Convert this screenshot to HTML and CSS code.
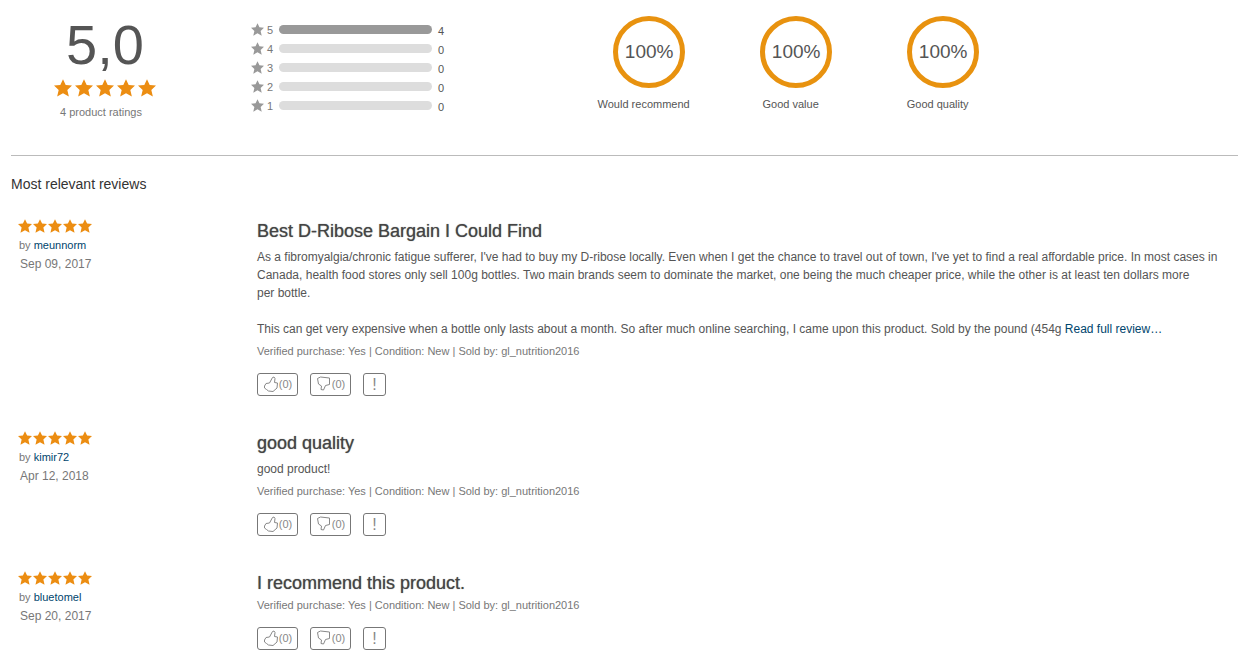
FILE: index.html
```html
<!DOCTYPE html>
<html lang="en">
<head>
  <meta charset="UTF-8">
  <meta name="viewport" content="width=device-width, initial-scale=1.0">
  <title>Ratings and Reviews</title>
  <link rel="stylesheet" href="styles.css">
</head>
<body>
  <!-- shared icons -->
  <svg class="sprite" aria-hidden="true">
    <symbol id="star" viewBox="0 0 20 20">
      <path d="M10 .3l3 6.300 7 .7-5.200 4.900 1.700 7.300L10 15.900l-6.500 3.600 1.700-7.300L0 7.300l7-.7z"/>
    </symbol>
    <symbol id="up" viewBox="0 0 16 18">
      <path d="M1.500 11L3 8.500l3.500-.5L9.500 2.500l1.500-.5 1 1.500-.5 4 3 .5-.5 5-4 3.500-4.500-.5-2-1.500-2-1.500z"/>
    </symbol>
    <symbol id="down" viewBox="0 0 16 18">
      <path d="M1.500 3.500L4.500 2l4.500.5 4.500.5v6.500L9.500 10.500 7.500 15l-2.500-.5.5-3.500-3-2z"/>
    </symbol>
  </svg>

  <!-- rating summary -->
  <section class="summary">
    <div class="score">
      <span class="score-num">5,0</span>
      <div class="stars stars-big" role="img" aria-label="5 out of 5 stars">
        <svg><use href="#star"/></svg><svg><use href="#star"/></svg><svg><use href="#star"/></svg><svg><use href="#star"/></svg><svg><use href="#star"/></svg>
      </div>
      <span class="score-count">4 product ratings</span>
    </div>
    <ul class="histogram">
      <li><svg><use href="#star"/></svg><span class="level">5</span><span class="bar full"></span><span class="count">4</span></li>
      <li><svg><use href="#star"/></svg><span class="level">4</span><span class="bar"></span><span class="count">0</span></li>
      <li><svg><use href="#star"/></svg><span class="level">3</span><span class="bar"></span><span class="count">0</span></li>
      <li><svg><use href="#star"/></svg><span class="level">2</span><span class="bar"></span><span class="count">0</span></li>
      <li><svg><use href="#star"/></svg><span class="level">1</span><span class="bar"></span><span class="count">0</span></li>
    </ul>
    <div class="aspects">
      <div class="aspect"><span class="ring">100%</span><span>Would recommend</span></div>
      <div class="aspect"><span class="ring">100%</span><span>Good value</span></div>
      <div class="aspect"><span class="ring">100%</span><span>Good quality</span></div>
    </div>
  </section>

  <!-- reviews -->
  <section class="reviews">
    <h2>Most relevant reviews</h2>

    <article class="review">
      <div class="author">
        <div class="stars" role="img" aria-label="5 out of 5 stars">
          <svg><use href="#star"/></svg><svg><use href="#star"/></svg><svg><use href="#star"/></svg><svg><use href="#star"/></svg><svg><use href="#star"/></svg>
        </div>
        <p class="by">by <a href="#">meunnorm</a></p>
        <p class="date">Sep 09, 2017</p>
      </div>
      <div class="content">
        <h3>Best D-Ribose Bargain I Could Find</h3>
        <p class="text">As a fibromyalgia/chronic fatigue sufferer, I've had to buy my D-ribose locally. Even when I get the chance to travel out of town, I've yet to find a real affordable price. In most cases in<br>Canada, health food stores only sell 100g bottles. Two main brands seem to dominate the market, one being the much cheaper price, while the other is at least ten dollars more<br>per bottle.<br><br>This can get very expensive when a bottle only lasts about a month. So after much online searching, I came upon this product. Sold by the pound (454g <a href="#">Read full review…</a></p>
        <p class="meta">Verified purchase: Yes | Condition: New | Sold by: gl_nutrition2016</p>
        <div class="votes">
          <button type="button" aria-label="Helpful (0)"><svg><use href="#up"/></svg>(0)</button>
          <button type="button" aria-label="Not helpful (0)"><svg><use href="#down"/></svg>(0)</button>
          <button type="button" class="report" aria-label="Report">!</button>
        </div>
      </div>
    </article>

    <article class="review">
      <div class="author">
        <div class="stars" role="img" aria-label="5 out of 5 stars">
          <svg><use href="#star"/></svg><svg><use href="#star"/></svg><svg><use href="#star"/></svg><svg><use href="#star"/></svg><svg><use href="#star"/></svg>
        </div>
        <p class="by">by <a href="#">kimir72</a></p>
        <p class="date">Apr 12, 2018</p>
      </div>
      <div class="content">
        <h3>good quality</h3>
        <p class="text">good product!</p>
        <p class="meta">Verified purchase: Yes | Condition: New | Sold by: gl_nutrition2016</p>
        <div class="votes">
          <button type="button" aria-label="Helpful (0)"><svg><use href="#up"/></svg>(0)</button>
          <button type="button" aria-label="Not helpful (0)"><svg><use href="#down"/></svg>(0)</button>
          <button type="button" class="report" aria-label="Report">!</button>
        </div>
      </div>
    </article>

    <article class="review">
      <div class="author">
        <div class="stars" role="img" aria-label="5 out of 5 stars">
          <svg><use href="#star"/></svg><svg><use href="#star"/></svg><svg><use href="#star"/></svg><svg><use href="#star"/></svg><svg><use href="#star"/></svg>
        </div>
        <p class="by">by <a href="#">bluetomel</a></p>
        <p class="date">Sep 20, 2017</p>
      </div>
      <div class="content">
        <h3>I recommend this product.</h3>
        <p class="meta">Verified purchase: Yes | Condition: New | Sold by: gl_nutrition2016</p>
        <div class="votes">
          <button type="button" aria-label="Helpful (0)"><svg><use href="#up"/></svg>(0)</button>
          <button type="button" aria-label="Not helpful (0)"><svg><use href="#down"/></svg>(0)</button>
          <button type="button" class="report" aria-label="Report">!</button>
        </div>
      </div>
    </article>
  </section>
</body>
</html>
```
FILE: styles.css
```css
* {
  margin: 0;
  padding: 0;
  box-sizing: border-box;
}
body {
  padding-left: 11px;
  font-family: "Liberation Sans", Arial, sans-serif;
  font-size: 12px;
  line-height: 18px;
  color: #555;
  background: #fff;
}
a {
  color: #00456d;
  text-decoration: none;
}
a:hover {
  text-decoration: underline;
}
.sprite {
  display: none;
}

/* summary */
.summary {
  display: flex;
  align-items: flex-start;
  padding: 15px 0 36px;
  border-bottom: 1px solid #bbb;
}
.score {
  display: flex;
  flex-direction: column;
  align-items: center;
  width: 188px;
  margin-right: 52px;
}
.score-num {
  font-size: 56px;
  line-height: 60px;
}
.score-count {
  margin: 8px 8px 0 0;
  font-size: 11px;
  line-height: 14px;
  color: #777;
}
.stars {
  display: flex;
  gap: 1px;
}
.stars svg {
  width: 14px;
  height: 14px;
  fill: #ec8d12;
}
.stars-big {
  gap: 3px;
  margin-top: 4px;
}
.stars-big svg {
  width: 18px;
  height: 18px;
}
.histogram {
  margin-top: 5px;
  list-style: none;
  font-size: 11px;
}
.histogram li {
  display: flex;
  align-items: center;
  height: 19px;
}
.histogram svg {
  width: 13px;
  height: 13px;
  fill: #999;
}
.level {
  width: 15px;
  padding-left: 3px;
  color: #777;
}
.bar {
  width: 153px;
  height: 9px;
  border-radius: 5px;
  background: #ddd;
}
.bar.full {
  background: #999;
}
.count {
  margin: 2px 0 0 6px;
}
.aspects {
  display: flex;
  margin-left: 126px;
}
.aspect {
  display: flex;
  flex-direction: column;
  align-items: center;
  width: 147px;
  font-size: 11px;
}
.ring {
  width: 72px;
  height: 72px;
  margin: 1px 0 7px 11px;
  border: 5px solid #e8920f;
  border-radius: 50%;
  font-size: 19px;
  line-height: 62px;
  text-align: center;
}

/* reviews */
.reviews h2 {
  margin: 19px 0 26px;
  font-size: 14px;
  font-weight: normal;
  color: #333;
}
.review {
  display: flex;
  margin-bottom: 35px;
}
.author {
  flex: none;
  width: 246px;
  padding-left: 7px;
}
.by {
  margin: 3px 0 1px 1px;
  font-size: 11px;
  color: #777;
}
.date {
  margin-left: 2px;
  color: #777;
}
.content {
  flex: 1;
  padding-top: 1px;
}
.content h3 {
  font-size: 18px;
  font-weight: normal;
  line-height: 22px;
  color: #444;
  text-shadow: 0 0 1px #777;
}
.text {
  margin: 6px 0 4px;
}
.meta {
  margin-top: 2px;
  font-size: 11px;
  color: #777;
}
.votes {
  display: flex;
  gap: 12px;
  margin-top: 13px;
}
.votes button {
  display: flex;
  align-items: center;
  justify-content: center;
  width: 41px;
  height: 23px;
  padding-bottom: 2px;
  border: 1px solid #777;
  border-radius: 3px;
  background: #fff;
  font-family: inherit;
  font-size: 11px;
  color: #888;
  cursor: pointer;
}
.votes svg {
  width: 16px;
  height: 18px;
  fill: none;
  stroke: #888;
}
.votes .report {
  width: 23px;
  padding-bottom: 0;
  font-size: 16px;
}
```
